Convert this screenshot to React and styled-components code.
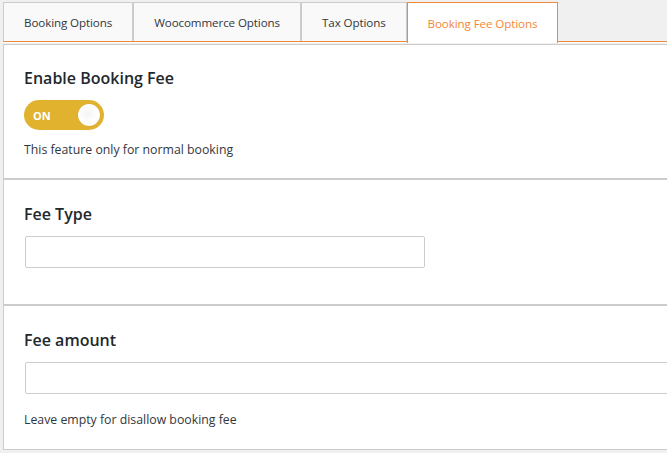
import React from 'react';
import styled, { createGlobalStyle } from 'styled-components';

const GlobalStyle = createGlobalStyle`
  html, body {
    margin: 0;
    padding: 0;
    background: #f0f0f0;
    overflow: hidden;
  }
  body {
    font-family: "Open Sans", "Noto Sans", sans-serif;
    color: #32373c;
  }
`;

const Wrap = styled.div`
  padding: 2px 0 0 3px;
  width: 760px;
`;

const TabBar = styled.div`
  display: flex;
  border-bottom: 1px solid #ee8a3b;
  height: 39px;
`;

const Tab = styled.div`
  box-sizing: border-box;
  height: ${p => (p.active ? '41px' : '39px')};
  padding: 0 20px;
  display: flex;
  align-items: center;
  font-size: 11.6px;
  letter-spacing: -0.1px;
  border: 1px solid ${p => (p.active ? '#ee8a3b' : '#cccccc')};
  border-bottom: none;
  background: ${p => (p.active ? '#ffffff' : '#f9f9f9')};
  color: ${p => (p.active ? '#f0883a' : '#32373c')};
  position: relative;
  z-index: ${p => (p.active ? 1 : 0)};
`;

const Panel = styled.div`
  margin-top: 1px;
  background: #fff;
  border-top: 1px solid #cccccc;
  border-left: 1px solid #cccccc;
  border-bottom: 1px solid #cccccc;
`;

const Gap = styled.div`
  height: 1px;
  background: #fff;
`;

const Section = styled.div`
  padding: ${p => p.top || 23}px 20px ${p => p.bottom || 19}px 20px;
  border-top: ${p => (p.first ? 'none' : '2px solid #cccccc')};
`;

const Heading = styled.h3`
  margin: 0 0 11px;
  font-size: 16px;
  line-height: 22px;
  font-weight: 600;
  color: #23282d;
`;

const Hint = styled.p`
  margin: ${p => p.top || 11}px 0 0;
  font-size: 12.3px;
  line-height: 18px;
  color: #32373c;
`;

const TextInput = styled.input.attrs({ type: 'text' })`
  display: block;
  box-sizing: border-box;
  width: ${p => p.width || '100%'};
  height: 32px;
  margin: 0 0 0 1px;
  border: 1px solid #cccccc;
  border-radius: 2px;
  background: #fff;
  outline: none;
`;

const Toggle = styled.div`
  position: relative;
  width: 80px;
  height: 30px;
  border-radius: 15px;
  background: #e1b22e;
  display: flex;
  align-items: center;
  padding-left: 9px;
  box-sizing: border-box;
`;

const ToggleLabel = styled.span`
  color: #fff;
  font-size: 11px;
  font-weight: 700;
`;

const Knob = styled.span`
  position: absolute;
  right: 4px;
  top: 4px;
  width: 22px;
  height: 22px;
  border-radius: 50%;
  background: radial-gradient(circle at 45% 45%, #f4f4f4 0%, #ffffff 55%, #ececec 100%);
  box-shadow: 0 0 1px rgba(0, 0, 0, 0.15);
`;

export default function App() {
  const tabs = ['Booking Options', 'Woocommerce Options', 'Tax Options', 'Booking Fee Options'];
  return (
    <>
      <GlobalStyle />
      <Wrap>
        <TabBar>
          {tabs.map((t, i) => (
            <Tab key={t} active={i === 3}>{t}</Tab>
          ))}
        </TabBar>
        <Gap />
        <Panel>
          <Section first top={22}>
            <Heading>Enable Booking Fee</Heading>
            <Toggle>
              <ToggleLabel>ON</ToggleLabel>
              <Knob />
            </Toggle>
            <Hint>This feature only for normal booking</Hint>
          </Section>
          <Section bottom={36}>
            <Heading>Fee Type</Heading>
            <TextInput width="400px" />
          </Section>
          <Section bottom={20}>
            <Heading>Fee amount</Heading>
            <TextInput />
            <Hint top={17}>Leave empty for disallow booking fee</Hint>
          </Section>
        </Panel>
      </Wrap>
    </>
  );
}
